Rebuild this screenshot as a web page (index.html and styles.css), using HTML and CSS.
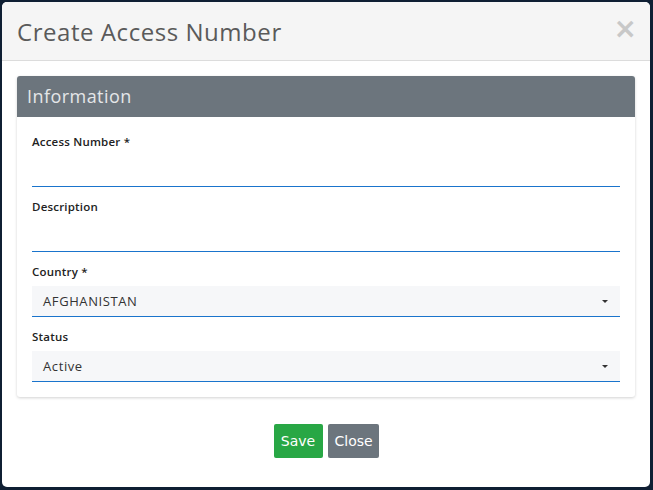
FILE: index.html
```html
<!DOCTYPE html>
<html>
<head>
<meta charset="utf-8">
<link rel="stylesheet" href="styles.css">
</head>
<body>
<div class="modal">
  <div class="modal-header">
    <h4 class="modal-title">Create Access Number</h4>
    <span class="close">&times;</span>
  </div>
  <div class="modal-body">
    <div class="panel">
      <div class="panel-heading">Information</div>
      <div class="panel-body">
        <div class="form-group">
          <label class="label">Access Number *</label>
          <div class="input"></div>
        </div>
        <div class="form-group">
          <label class="label">Description</label>
          <div class="input"></div>
        </div>
        <div class="form-group">
          <label class="label">Country *</label>
          <div class="select"><span>AFGHANISTAN</span><i class="caret"></i></div>
        </div>
        <div class="form-group">
          <label class="label">Status</label>
          <div class="select"><span>Active</span><i class="caret"></i></div>
        </div>
      </div>
    </div>
  </div>
  <div class="modal-footer">
    <button class="btn btn-save">Save</button>
    <button class="btn btn-close">Close</button>
  </div>
</div>
</body>
</html>
```

FILE: styles.css
```css
html, body {
  margin: 0;
  padding: 0;
}
body {
  width: 653px;
  height: 490px;
  background: #0f1f33;
  padding: 2px 3px 3px 2px;
  box-sizing: border-box;
  font-family: "Open Sans", sans-serif;
  overflow: hidden;
}
.modal {
  background: #fff;
  border-radius: 5px;
  height: 485px;
  display: flex;
  flex-direction: column;
  overflow: hidden;
}
.modal-header {
  background: #f5f5f5;
  border-bottom: 1px solid #dcdcdc;
  height: 58px;
  padding: 0 15px;
  display: flex;
  align-items: center;
  justify-content: space-between;
}
.modal-title {
  margin: 0;
  font-weight: 400;
  font-size: 24px;
  letter-spacing: 0.55px;
  color: #5a5a5a;
}
.close {
  font-family: "DejaVu Sans", sans-serif;
  font-size: 28px;
  font-weight: bold;
  color: #c8c8c8;
  line-height: 1;
  margin-right: -2px;
  margin-top: -4px;
}
.modal-body {
  padding: 15px;
}
.panel {
  border-radius: 3px;
  box-shadow: 0 1px 3px rgba(0,0,0,0.18);
  overflow: hidden;
}
.panel-heading {
  background: #6c757d;
  color: #e4e6e8;
  height: 41px;
  line-height: 41px;
  padding: 0 10px;
  font-size: 18px;
  letter-spacing: 0.45px;
}
.panel-body {
  padding: 17px 15px 15px;
}
.form-group {
  margin-bottom: 12px;
}
.form-group:last-child {
  margin-bottom: 0;
}
.label {
  display: block;
  font-size: 11.5px;
  font-weight: 600;
  letter-spacing: 0.2px;
  color: #222;
  line-height: 16px;
  margin-bottom: 6px;
}
.input {
  height: 30px;
  border-bottom: 1px solid #1a74cc;
}
.select {
  height: 30px;
  background: #f6f7f9;
  border-bottom: 1px solid #1a74cc;
  display: flex;
  align-items: center;
  justify-content: space-between;
  padding: 0 12px 0 11px;
  font-size: 13px;
  letter-spacing: 0.6px;
  color: #333;
}
.caret {
  width: 0;
  height: 0;
  border-left: 3px solid transparent;
  border-right: 3px solid transparent;
  border-top: 3px solid #333;
}
.modal-footer {
  display: flex;
  justify-content: center;
  gap: 5px;
  padding-top: 12px;
}
.btn {
  border: none;
  border-radius: 2px;
  height: 34px;
  padding: 0 7px;
  font-family: "DejaVu Sans", sans-serif;
  font-size: 14px;
  color: #fff;
}
.btn-save {
  background: #28a745;
  width: 49px;
}
.btn-close {
  background: #6c757d;
  width: 51px;
}
```
